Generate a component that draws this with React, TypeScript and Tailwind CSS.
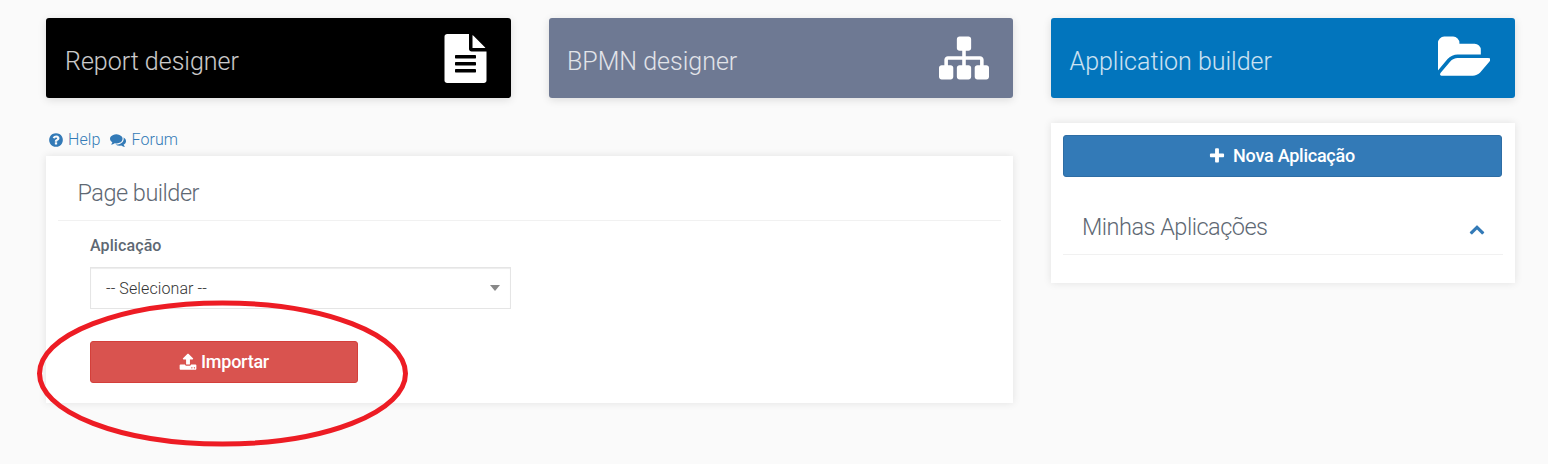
import type { ReactNode } from "react";

const ICONS = {
  file: "M1596 476q14 14 28 36h-472v-472q22 14 36 28zm-476 164h544v1056q0 40-28 68t-68 28h-1344q-40 0-68-28t-28-68v-1600q0-40 28-68t68-28h800v544q0 40 28 68t68 28zm160 736v-64q0-14-9-23t-23-9h-704q-14 0-23 9t-9 23v64q0 14 9 23t23 9h704q14 0 23-9t9-23zm0-256v-64q0-14-9-23t-23-9h-704q-14 0-23 9t-9 23v64q0 14 9 23t23 9h704q14 0 23-9t9-23zm0-256v-64q0-14-9-23t-23-9h-704q-14 0-23 9t-9 23v64q0 14 9 23t23 9h704q14 0 23-9t9-23z",
  sitemap:
    "M1792 1248v320q0 40-28 68t-68 28h-320q-40 0-68-28t-28-68v-320q0-40 28-68t68-28h96v-192h-512v192h96q40 0 68 28t28 68v320q0 40-28 68t-68 28h-320q-40 0-68-28t-28-68v-320q0-40 28-68t68-28h96v-192h-512v192h96q40 0 68 28t28 68v320q0 40-28 68t-68 28h-320q-40 0-68-28t-28-68v-320q0-40 28-68t68-28h96v-192q0-52 38-90t90-38h512v-192h-96q-40 0-68-28t-28-68v-320q0-40 28-68t68-28h320q40 0 68 28t28 68v320q0 40-28 68t-68 28h-96v192h512q52 0 90 38t38 90v192h96q40 0 68 28t28 68z",
  folder:
    "M1879 952q0 31-31 66l-336 396q-43 51-120.500 86.500t-143.500 35.500h-1088q-34 0-60.500-13t-26.500-43q0-31 31-66l336-396q43-51 120.500-86.500t143.500-35.500h1088q34 0 60.500 13t26.500 43zm-343-344v160h-832q-94 0-197 47.500t-164 119.500l-337 396-5 6q0-4-.5-12.500t-.5-12.500v-960q0-92 66-158t158-66h320q92 0 158 66t66 158v32h544q92 0 158 66t66 158z",
  help: "M1024 1376v-192q0-14-9-23t-23-9h-192q-14 0-23 9t-9 23v192q0 14 9 23t23 9h192q14 0 23-9t9-23zm256-672q0-88-55.500-163t-138.500-116-170-41q-243 0-371 213-15 24 8 42l132 100q7 6 19 6 16 0 25-12 53-68 86-92 34-24 86-24 48 0 85.500 26t37.500 59q0 38-20 61t-68 45q-63 28-115.500 86.500t-52.500 125.500v36q0 14 9 23t23 9h192q14 0 23-9t9-23q0-19 21.500-49.500t54.500-49.500q32-18 49-28.500t46-35 44.500-48 28-60.500 12.500-81zm384 192q0 209-103 385.500t-279.500 279.500-385.500 103-385.500-103-279.500-279.500-103-385.500 103-385.500 279.500-279.500 385.500-103 385.500 103 279.500 279.500 103 385.500z",
  comments:
    "M1408 768q0 139-94 257t-256.500 186.500-353.500 68.500q-86 0-176-16-124 88-278 128-36 9-86 16h-3q-11 0-20.500-8t-11.500-21q-1-3-1-6.500t.5-6.500 2-6l2.500-5 3.500-5.500 4-5 4.500-5 4-4.500q5-6 23-25t26-29.500 22.500-29 25-38.500 20.500-44q-124-72-195-177t-71-224q0-139 94-257t256.500-186.500 353.500-68.500 353.500 68.500 256.500 186.500 94 257zm384 256q0 120-71 224.500t-195 176.500q10 24 20.500 44t25 38.500 22.500 29 26 29.500 23 25q1 1 4 4.500t4.500 5 4 5 3.500 5.500l2.500 5 2 6 .5 6.500-1 6.500q-3 14-13 22t-22 7q-50-7-86-16-154-40-278-128-90 16-176 16-271 0-472-132 58 4 88 4 161 0 309-45t264-129q125-92 192-212t67-254q0-77-23-152 129 71 204 178t75 230z",
  upload:
    "M1344 1472q0-26-19-45t-45-19-45 19-19 45 19 45 45 19 45-19 19-45zm256 0q0-26-19-45t-45-19-45 19-19 45 19 45 45 19 45-19 19-45zm128-224v320q0 40-28 68t-68 28h-1472q-40 0-68-28t-28-68v-320q0-40 28-68t68-28h427q21 56 70.500 92t110.500 36h256q61 0 110.500-36t70.500-92h427q40 0 68 28t28 68zm-325-648q-17 40-59 40h-256v448q0 26-19 45t-45 19h-256q-26 0-45-19t-19-45v-448h-256q-42 0-59-40-17-39 14-69l448-448q18-19 45-19t45 19l448 448q31 30 14 69z",
  plus: "M1600 736v192q0 40-28 68t-68 28h-416v416q0 40-28 68t-68 28h-192q-40 0-68-28t-28-68v-416h-416q-40 0-68-28t-28-68v-192q0-40 28-68t68-28h416v-416q0-40 28-68t68-28h192q40 0 68 28t28 68v416h416q40 0 68 28t28 68z",
  chevronUp:
    "M1683 1331l-166 165q-19 19-45 19t-45-19l-531-531-531 531q-19 19-45 19t-45-19l-166-165q-19-19-19-45.500t19-45.500l742-741q19-19 45-19t45 19l742 741q19 19 19 45.500t-19 45.500z",
};

function Icon({ name, className, viewBox = "0 0 1792 1792" }: { name: keyof typeof ICONS; className: string; viewBox?: string }) {
  return (
    <svg viewBox={viewBox} className={`shrink-0 ${className}`} fill="currentColor" aria-hidden="true">
      <path d={ICONS[name]} />
    </svg>
  );
}

function Tile({ title, className, children }: { title: string; className: string; children: ReactNode }) {
  return (
    <a className={`flex h-20 justify-between rounded-[3px] pt-4 shadow-[0_2px_8px_rgba(0,0,0,0.12)] ${className}`}>
      <span className="pt-3 text-[25px] leading-8 font-light whitespace-nowrap text-white/80">{title}</span>
      {children}
    </a>
  );
}

export default function App() {
  return (
    <div className="relative h-[464px] w-[1548px] overflow-hidden bg-[#fafafa] pt-[18px] pl-[46px] font-['Roboto',sans-serif] text-[#5e6873]">
      <div className="grid grid-cols-[465px_464px_464px] gap-x-[38px]">
        <Tile title="Report designer" className="bg-black pr-[24px] pl-[19px]">
          <Icon name="file" viewBox="128 0 1536 1792" className="h-[49px] w-[43px] text-white" />
        </Tile>
        <Tile title="BPMN designer" className="bg-[#6e7993] pr-[24px] pl-[18px]">
          <Icon name="sitemap" className="-mt-[1px] size-[50px] text-white" />
        </Tile>
        <Tile title="Application builder" className="bg-[#0275bd] pr-[25px] pl-[18.5px]">
          <Icon name="folder" viewBox="0 0 1879 1792" className="-mt-[1px] h-[50px] w-[52.4px] text-white" />
        </Tile>
      </div>

      <div className="flex gap-[38px]">
        <main className="w-[967px]">
          <nav className="flex h-[58px] pt-8 pl-[2px] text-base leading-5 font-light text-[#337ab7]">
            <a className="flex tracking-[0.1px]">
              <Icon name="help" className="mt-[2px] mr-[4px] size-[16px]" />
              Help
            </a>
            <a className="ml-[10px] flex tracking-[0.1px]">
              <Icon name="comments" className="mt-[2px] mr-[5px] size-[16px]" />
              Forum
            </a>
          </nav>
          <section className="h-[247px] bg-white px-3 pt-[11px] shadow-[0_0_8px_rgba(0,0,0,0.1)]">
            <h2 className="h-[54px] border-b border-[#f1f1f1] pt-[10px] pl-[19.5px] text-[23.5px] leading-8 font-light tracking-[-0.5px]">Page builder</h2>
            <div className="pl-8">
              <label className="block pt-[13px] text-base leading-6 font-medium tracking-[0.1px]">Aplicação</label>
              <div className="mt-[9px] flex h-[42px] w-[421px] items-center justify-between border border-[#e5e5e5] pr-[10px] pl-[15px] text-base font-light text-[#333] shadow-[inset_0_1px_1px_rgba(0,0,0,0.075)]">
                <span className="pt-[2px] tracking-[0.1px]">-- Selecionar --</span>
                <span className="border-x-[5px] border-t-[6px] border-x-transparent border-t-[#888]" />
              </div>
              <button className="mt-8 flex h-[42px] w-[268px] items-center justify-center rounded-[3px] border border-[#d43f3a] bg-[#d9534f] text-lg font-medium tracking-[-0.25px] text-white">
                <Icon name="upload" className="mr-1 size-[18px]" />
                Importar
              </button>
            </div>
          </section>
        </main>

        <aside className="mt-[25px] h-[160px] w-[464px] bg-white px-3 pt-3 shadow-[0_0_8px_rgba(0,0,0,0.1)]">
          <button className="flex h-[42px] w-[439px] items-center justify-center rounded-[3px] border border-[#2e6da4] bg-[#337ab7] pr-[2px] text-lg font-medium tracking-[-0.25px] text-white">
            <Icon name="plus" className="mr-[7px] size-[18px]" />
            Nova Aplicação
          </button>
          <div className="flex h-[78px] justify-between border-b border-[#f1f1f1] pt-[34px] pr-[18px] pl-[19px]">
            <h2 className="text-[23.5px] leading-8 font-light tracking-[-0.5px]">Minhas Aplicações</h2>
            <Icon name="chevronUp" className="mt-[10px] size-[16px] text-[#337ab7]" />
          </div>
        </aside>
      </div>

      <svg className="pointer-events-none absolute top-0 left-0 h-[464px] w-[420px]" aria-hidden="true">
        <ellipse cx="222.500" cy="373.500" rx="183" ry="70.500" fill="none" stroke="#ed1c24" strokeWidth="5" />
      </svg>
    </div>
  );
}
